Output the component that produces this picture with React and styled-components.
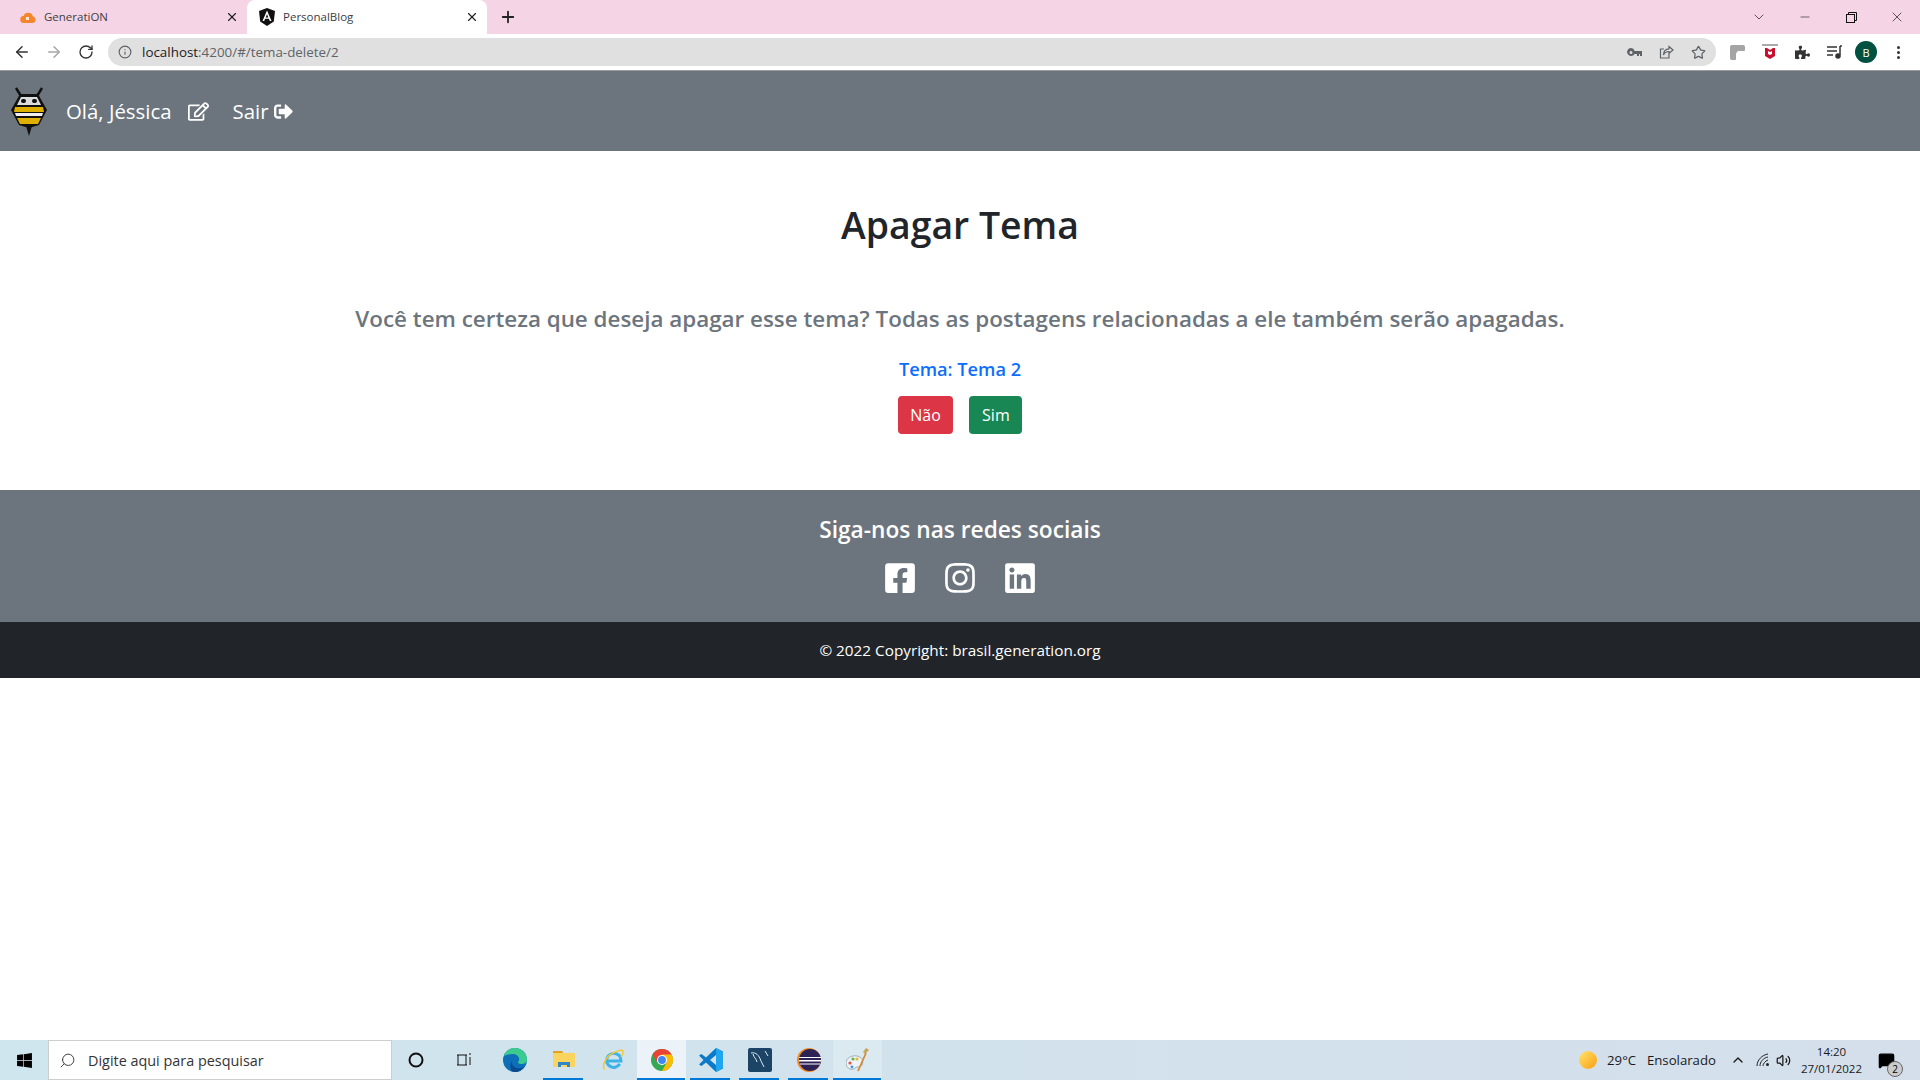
import React from 'react'
import styled, { createGlobalStyle } from 'styled-components'
import { FaRegEdit, FaSignOutAlt, FaFacebookSquare, FaInstagram, FaLinkedin, FaPuzzlePiece, FaWindows } from 'react-icons/fa'
import { ArrowLeft, ArrowRight, RotateCw, Info, Star, Search, X, Plus, ChevronDown, Minus, ChevronUp, Volume2, MessageSquare } from 'lucide-react'

const GlobalStyle = createGlobalStyle`
  html, body {
    margin: 0;
    padding: 0;
    background: #fff;
    font-family: 'Open Sans', 'Noto Sans', sans-serif;
  }
  * {
    box-sizing: border-box;
  }
`

const Page = styled.div`
  min-height: 100vh;
  display: flex;
  flex-direction: column;
`

const TabStrip = styled.div`
  height: 34px;
  background: #f5d5e5;
  display: flex;
  align-items: stretch;
`

const Tab = styled.div`
  width: ${p => p.$width}px;
  padding: 0 8px 0 ${p => (p.$active ? 12 : 20)}px;
  display: flex;
  align-items: center;
  gap: 8px;
  font-size: 11.5px;
  color: #3c4043;
  background: ${p => (p.$active ? '#fff' : 'transparent')};
  border-radius: 8px 8px 0 0;
  & > span {
    flex: 1;
    margin-top: -1px;
  }
`

const NewTab = styled.div`
  width: 42px;
  display: flex;
  align-items: center;
  justify-content: center;
  color: #222;
`

const WindowControls = styled.div`
  margin-left: auto;
  display: flex;
  align-items: center;
  color: #111;
`

const WindowButton = styled.div`
  width: 46px;
  display: flex;
  justify-content: center;
`

const Toolbar = styled.div`
  height: 36px;
  background: #fff;
  display: flex;
  align-items: center;
  padding-left: 6px;
`

const NavButton = styled.div`
  width: 32px;
  display: flex;
  justify-content: center;
  color: ${p => (p.$disabled ? '#a6a6a6' : '#333')};
`

const Omnibox = styled.div`
  margin-left: 6px;
  flex: 1;
  height: 28px;
  border-radius: 14px;
  background: #e0e0e0;
  display: flex;
  align-items: center;
  padding: 0 10px;
  gap: 10px;
  font-size: 13.4px;
  color: #5f6368;
  & b {
    font-weight: 400;
    color: #202124;
  }
`

const OmniActions = styled.div`
  margin-left: auto;
  display: flex;
  align-items: center;
  gap: 17px;
  color: #5f6368;
`

const Extensions = styled.div`
  width: 204px;
  padding-left: 14px;
  display: flex;
  align-items: center;
  gap: 17px;
  color: #333;
`

const Avatar = styled.div`
  width: 22px;
  height: 22px;
  margin-left: -5px;
  border-radius: 50%;
  background: #00513f;
  color: #fff;
  font-size: 11px;
  display: flex;
  align-items: center;
  justify-content: center;
`

const Dots = styled.div`
  margin-left: 3px;
  display: flex;
  flex-direction: column;
  gap: 2px;
  & i {
    width: 3px;
    height: 3px;
    border-radius: 50%;
    background: #333;
  }
`

const Navbar = styled.nav`
  height: 81px;
  background: #6c757d;
  border-top: 1px solid #9a9a9a;
  display: flex;
  align-items: center;
  padding-left: 9px;
  color: #fff;
  font-size: 20.4px;
`

const NavName = styled.span`
  margin-left: 17px;
`

const EditLink = styled.span`
  margin-left: 16px;
  margin-right: 24px;
  display: flex;
`

const LogoutLink = styled.span`
  display: flex;
  align-items: center;
  gap: 5px;
`

const Main = styled.main`
  height: 339px;
  padding-top: 50px;
  text-align: center;
`

const Title = styled.h1`
  margin: 0;
  font-size: 37.4px;
  line-height: 48px;
  font-weight: 600;
  color: #212529;
`

const Question = styled.h3`
  margin: 53px 0 0;
  font-size: 22.4px;
  line-height: 34px;
  font-weight: 600;
  color: #6c757d;
`

const Subject = styled.h5`
  margin: 21px 0 0;
  font-size: 18.2px;
  line-height: 24px;
  font-weight: 600;
  color: #0d6efd;
`

const Actions = styled.div`
  margin-top: 15px;
  display: flex;
  justify-content: center;
  gap: 16px;
`

const Button = styled.button`
  height: 38px;
  padding: 0 12.6px;
  border: 0;
  border-radius: 4px;
  font-family: inherit;
  font-size: 16px;
  color: #fff;
  background: ${p => p.$bg};
`

const Social = styled.footer`
  height: 132px;
  background: #6c757d;
  color: #fff;
  padding-top: 25px;
  text-align: center;
`

const SocialTitle = styled.h5`
  margin: 0;
  font-size: 22.7px;
  line-height: 30px;
  font-weight: 600;
`

const SocialIcons = styled.div`
  margin-top: 16px;
  display: flex;
  justify-content: center;
  gap: 26px;
  font-size: 34px;
  & svg {
    display: block;
  }
`

const Copyright = styled.div`
  height: 56px;
  background: #212529;
  color: #fff;
  font-size: 15.3px;
  display: flex;
  align-items: center;
  justify-content: center;
`

const Taskbar = styled.div`
  margin-top: auto;
  height: 40px;
  background: linear-gradient(90deg, #cfe6ef 0%, #d2e2ec 50%, #d4dfeb 100%);
  display: flex;
  align-items: stretch;
  color: #1a1a1a;
`

const StartButton = styled.div`
  width: 48px;
  display: flex;
  align-items: center;
  justify-content: center;
  font-size: 17px;
  color: #000;
`

const SearchBox = styled.div`
  width: 344px;
  background: #fff;
  border: 1px solid #ccc;
  display: flex;
  align-items: center;
  gap: 12px;
  padding-left: 10px;
  font-size: 14.4px;
  color: #333;
`

const TaskSlot = styled.div`
  width: ${p => (p.$app ? 49 : 48)}px;
  position: relative;
  display: flex;
  align-items: center;
  justify-content: center;
  background: ${p => (p.$current ? '#ebf3f8' : p.$hot ? '#dbe9f0' : 'transparent')};
  &::after {
    content: '';
    display: ${p => (p.$open || p.$current || p.$hot ? 'block' : 'none')};
    position: absolute;
    bottom: 0;
    left: ${p => (p.$current || p.$hot ? 0 : 4)}px;
    right: ${p => (p.$current || p.$hot ? 1 : 5)}px;
    height: 2px;
    background: #0078d7;
  }
`

const TaskApps = styled.div`
  margin-left: 2px;
  display: flex;
`

const Tray = styled.div`
  margin-left: auto;
  display: flex;
  align-items: center;
  font-size: 13.2px;
`

const Weather = styled.span`
  margin: 0 8px 0 10px;
  word-spacing: 2px;
`

const TrayIcon = styled.span`
  display: flex;
  margin-left: ${p => p.$gap || 0}px;
`

const Clock = styled.div`
  margin-left: 10px;
  text-align: center;
  font-size: 11.5px;
  line-height: 17px;
`

const Notice = styled.div`
  position: relative;
  width: 36px;
  margin-left: 16px;
  margin-right: 6px;
  display: flex;
  align-items: center;
  color: #000;
`

const NoticeBadge = styled.span`
  position: absolute;
  left: 9px;
  top: 9px;
  width: 16px;
  height: 16px;
  border-radius: 50%;
  background: #ccc;
  border: 1px solid #666;
  font-size: 10px;
  display: flex;
  align-items: center;
  justify-content: center;
`

const Bee = () => (
  <svg width="40" height="50" viewBox="0 0 40 50">
    <path d="M12 10 7 2M28 10l5-8" stroke="#111" strokeWidth="2.5" fill="none" />
    <path d="M11 8h18l9 16-8 15-10 3-10-3-8-15z" fill="#111" />
    <path d="M20 50l-3-10h6z" fill="#111" />
    <path d="M12 11h16l4 8H8z" fill="#ddd" />
    <rect x="12" y="13" width="5" height="4" rx="2" fill="#111" />
    <rect x="23" y="13" width="5" height="4" rx="2" fill="#111" />
    <path d="M6 21h28l1 5H5z" fill="#e0b000" />
    <path d="M6 27h28l-1 3H7z" fill="#eee" />
    <path d="M8 32h24l-3 6H11z" fill="#e0b000" />
  </svg>
)

const CloudFavicon = () => (
  <svg width="16" height="16" viewBox="0 0 16 16">
    <path d="M4 14a3.500 3.500 0 0 1-.5-7A5 5 0 0 1 13 7.500 3.300 3.300 0 0 1 12.500 14z" fill="#f5862e" />
    <rect x="6" y="8" width="3" height="3" fill="#fff" opacity=".8" />
  </svg>
)

const AngularFavicon = () => (
  <svg width="16" height="18" viewBox="0 0 16 18">
    <path d="M8 0 0 3l1.200 10.500L8 18l6.800-4.500L16 3z" fill="#111" />
    <path d="M8 2.500 3.500 13h1.700l.9-2.300h3.800l.9 2.300h1.700zm-1.300 7L8 6.300l1.300 3.200z" fill="#fff" />
  </svg>
)

const KeyIcon = () => (
  <svg width="15" height="9" viewBox="0 0 15 9" fill="#5f6368">
    <path d="M4 0a4 4 0 1 0 3.600 6H10v2h2V6h1v2h2V3H7.600A4 4 0 0 0 4 0zm0 3a1.500 1.500 0 1 1 0 3 1.500 1.500 0 0 1 0-3z" />
  </svg>
)

const ShareIcon = () => (
  <svg width="15" height="15" viewBox="0 0 15 15" fill="none" stroke="#5f6368" strokeWidth="1.200">
    <path d="M10 9v4H1.500V4H5" />
    <path d="M10 1.500 14 5l-4 3.500V6.500C7.500 6.500 5.500 7.500 4.500 10c0-4 2.500-6 5.500-6.200z" />
  </svg>
)

const PinExtension = () => (
  <svg width="15" height="15" viewBox="0 0 15 15">
    <path d="M2 0h11s2 0 2 2v3c0 1-1 1-1 1H9C7 6 6 8 6 10v4c0 1-1 1-1 1H2s-2 0-2-2V2s0-2 2-2z" fill="#a5a5a5" />
  </svg>
)

const McAfee = () => (
  <svg width="16" height="16" viewBox="0 0 16 16">
    <rect x="0" y="0" width="16" height="2" fill="#aaa" />
    <path d="M3 4h2l3 2 3-2h2v8l-5 3-5-3z" fill="#c8102e" />
    <path d="M6 7l2 1 2-1v3l-2 1-2-1z" fill="#fff" />
  </svg>
)

const MediaIcon = () => (
  <svg width="16" height="14" viewBox="0 0 16 14" fill="none" stroke="#333" strokeWidth="1.500">
    <path d="M0 2h10M0 6h10M0 10h6" />
    <path d="M13 1v9" />
    <circle cx="11" cy="11" r="2" fill="#333" />
    <path d="M13 1h2" />
  </svg>
)

const Edge = () => (
  <svg width="24" height="24" viewBox="0 0 24 24">
    <circle cx="12" cy="12" r="12" fill="#0c6fb8" />
    <path d="M1 8C3 2 8 0 12 0c7 0 12 5 12 12 0 3-3 4-6 4-2 0-3-1-3-2 3-3 0-8-5-8-4 0-7 1-9 2z" fill="#3ccb8e" />
    <path d="M9 13c-1 6 5 9 12 6-2 3-5 5-9 5-2 0-4-1-4-2-1-3-1-6 1-9z" fill="#0a4a8f" />
  </svg>
)

const Folder = () => (
  <svg width="22" height="22" viewBox="0 0 22 22">
    <path d="M0 2h9l2 3H0z" fill="#e0a31e" />
    <rect y="4" width="22" height="14" fill="#fbd35f" />
    <path d="M5 18v-5h12v5h-3v-2H8v2z" fill="#2d87c9" />
  </svg>
)

const Explorer = () => (
  <svg width="24" height="24" viewBox="0 0 24 24" fill="none">
    <path d="M5 13h15c0-9-11-10-14-3-2 5 3 11 9 9 2-1 3-2 4-3" stroke="#3fb2e8" strokeWidth="3" />
    <path d="M4 21C0 20 4 9 12 5c6-3 10-4 10-1 0 2-1 4-2 5" stroke="#f0c93a" strokeWidth="1.500" />
  </svg>
)

const Chrome = () => (
  <svg width="22" height="22" viewBox="0 0 24 24">
    <circle cx="12" cy="12" r="12" fill="#34a853" />
    <path d="M12 12 22.400 6A12 12 0 0 0 1.600 6l5 8z" fill="#ea4335" />
    <path d="M12 6h10.400A12 12 0 0 1 12 24l5-9z" fill="#fbbc05" />
    <circle cx="12" cy="12" r="5.500" fill="#fff" />
    <circle cx="12" cy="12" r="4.300" fill="#4285f4" />
  </svg>
)

const VsCode = () => (
  <svg width="24" height="24" viewBox="0 0 24 24">
    <path d="M17 0l7 3.500v17L17 24 7 14.500 2.500 18 0 16.500 4.500 12 0 7.500 2.500 6 7 9.500zM17 7l-6 5 6 5z" fill="#0a7ac9" />
    <path d="M17 0l7 3.500v17L17 24z" fill="#22a5ef" />
  </svg>
)

const Workbench = () => (
  <svg width="24" height="24" viewBox="0 0 24 24" fill="none">
    <rect width="24" height="24" rx="2" fill="#1c4467" />
    <path d="M3 5c5-1 8 2 10 8l3 6M5 6c1 4 3 4 4 8M17 3l3 5" stroke="#dfe8ee" strokeWidth="1" />
  </svg>
)

const Eclipse = () => (
  <svg width="24" height="24" viewBox="0 0 24 24">
    <circle cx="12" cy="12" r="12" fill="#f08a24" />
    <circle cx="13" cy="12" r="11" fill="#2c2255" />
    <path d="M2 9h22v1H2zM2 12h22v1.500H2zM3 15.500h20v1H3z" fill="#fff" />
  </svg>
)

const Paint = () => (
  <svg width="24" height="24" viewBox="0 0 24 24">
    <path d="M0 15c0-5 6-8 11-7 5 1 7 5 5 9-2 3-5 1-7 3-2 3-9 1-9-5z" fill="#eef3f6" stroke="#7f939f" strokeWidth=".7" />
    <circle cx="4" cy="15" r="1.600" fill="#e2574c" />
    <circle cx="7" cy="11" r="1.600" fill="#6bb34a" />
    <circle cx="11" cy="11" r="1.600" fill="#e8b931" />
    <circle cx="6" cy="19" r="1.400" fill="#4a90d9" />
    <path d="M12 23 20 5" stroke="#d18b3a" strokeWidth="1.800" />
    <path d="M19 6l-2-2 3-4 3 2z" fill="#c9a35c" />
  </svg>
)

const Sun = () => (
  <svg width="18" height="18" viewBox="0 0 18 18">
    <defs>
      <linearGradient id="sun" x1="0" y1="0" x2="1" y2="1">
        <stop offset="0" stopColor="#ffe36b" />
        <stop offset="1" stopColor="#fb9f12" />
      </linearGradient>
    </defs>
    <circle cx="9" cy="9" r="9" fill="url(#sun)" />
  </svg>
)

const Network = () => (
  <svg width="14" height="14" viewBox="0 0 14 14" fill="none" stroke="#222" strokeWidth="1">
    <path d="M1 13C1 7 6 2 12 1M4 13c0-4 3-8 8-9M7 13c0-2 2-5 5-6" />
    <circle cx="11.500" cy="11.500" r="1.500" fill="#222" stroke="none" />
  </svg>
)

const TASK_APPS = [
  { key: 'edge', icon: <Edge /> },
  { key: 'folder', icon: <Folder />, open: true },
  { key: 'ie', icon: <Explorer /> },
  { key: 'chrome', icon: <Chrome />, current: true },
  { key: 'code', icon: <VsCode />, open: true },
  { key: 'mysql', icon: <Workbench />, open: true },
  { key: 'eclipse', icon: <Eclipse />, open: true },
  { key: 'paint', icon: <Paint />, hot: true },
]

export default function App() {
  return (
    <Page>
      <GlobalStyle />
      <TabStrip>
        <Tab $width={247}>
          <CloudFavicon />
          <span>GeneratiON</span>
          <X size={14} color="#222" />
        </Tab>
        <Tab $width={240} $active>
          <AngularFavicon />
          <span>PersonalBlog</span>
          <X size={14} color="#222" />
        </Tab>
        <NewTab>
          <Plus size={18} strokeWidth={2.4} />
        </NewTab>
        <WindowControls>
          <WindowButton><ChevronDown size={16} strokeWidth={1} /></WindowButton>
          <WindowButton><Minus size={14} strokeWidth={1} /></WindowButton>
          <WindowButton>
            <svg width="11" height="11" viewBox="0 0 11 11" fill="none" stroke="#111">
              <rect x=".5" y="2.500" width="8" height="8" />
              <path d="M2.500 2.500v-2h8v8h-2" />
            </svg>
          </WindowButton>
          <WindowButton><X size={16} strokeWidth={1} /></WindowButton>
        </WindowControls>
      </TabStrip>

      <Toolbar>
        <NavButton><ArrowLeft size={18} /></NavButton>
        <NavButton $disabled><ArrowRight size={18} /></NavButton>
        <NavButton><RotateCw size={16} /></NavButton>
        <Omnibox>
          <Info size={14} />
          <span><b>localhost</b>:4200/#/tema-delete/2</span>
          <OmniActions>
            <KeyIcon />
            <ShareIcon />
            <Star size={15} />
          </OmniActions>
        </Omnibox>
        <Extensions>
          <PinExtension />
          <McAfee />
          <FaPuzzlePiece size={15} />
          <MediaIcon />
          <Avatar>B</Avatar>
          <Dots><i /><i /><i /></Dots>
        </Extensions>
      </Toolbar>

      <Navbar>
        <Bee />
        <NavName>Olá, Jéssica</NavName>
        <EditLink><FaRegEdit size={21} /></EditLink>
        <LogoutLink>Sair <FaSignOutAlt size={19} /></LogoutLink>
      </Navbar>

      <Main>
        <Title>Apagar Tema</Title>
        <Question>Você tem certeza que deseja apagar esse tema? Todas as postagens relacionadas a ele também serão apagadas.</Question>
        <Subject>Tema: Tema 2</Subject>
        <Actions>
          <Button $bg="#dc3545">Não</Button>
          <Button $bg="#198754">Sim</Button>
        </Actions>
      </Main>

      <Social>
        <SocialTitle>Siga-nos nas redes sociais</SocialTitle>
        <SocialIcons>
          <FaFacebookSquare />
          <FaInstagram />
          <FaLinkedin />
        </SocialIcons>
      </Social>
      <Copyright>© 2022 Copyright: brasil.generation.org</Copyright>

      <Taskbar>
        <StartButton><FaWindows /></StartButton>
        <SearchBox>
          <Search size={17} strokeWidth={1.3} style={{ transform: 'scaleX(-1)' }} />
          Digite aqui para pesquisar
        </SearchBox>
        <TaskSlot>
          <svg width="16" height="16" viewBox="0 0 16 16" fill="none" stroke="#111" strokeWidth="2">
            <circle cx="8" cy="8" r="6.500" />
          </svg>
        </TaskSlot>
        <TaskSlot>
          <svg width="16" height="16" viewBox="0 0 16 16" fill="none" stroke="#111">
            <path d="M1 3h10M1 13h10M2 3v10M10 3v10M14 1v2M14 5v8" />
          </svg>
        </TaskSlot>
        <TaskApps>
          {TASK_APPS.map(app => (
            <TaskSlot key={app.key} $app $open={app.open} $current={app.current} $hot={app.hot}>
              {app.icon}
            </TaskSlot>
          ))}
        </TaskApps>
        <Tray>
          <Sun />
          <Weather>29°C &nbsp;Ensolarado</Weather>
          <TrayIcon $gap={6}><ChevronUp size={16} /></TrayIcon>
          <TrayIcon $gap={10}><Network /></TrayIcon>
          <TrayIcon $gap={6}><Volume2 size={15} /></TrayIcon>
          <Clock>14:20<br />27/01/2022</Clock>
          <Notice>
            <MessageSquare size={17} fill="#000" />
            <NoticeBadge>2</NoticeBadge>
          </Notice>
        </Tray>
      </Taskbar>
    </Page>
  )
}
